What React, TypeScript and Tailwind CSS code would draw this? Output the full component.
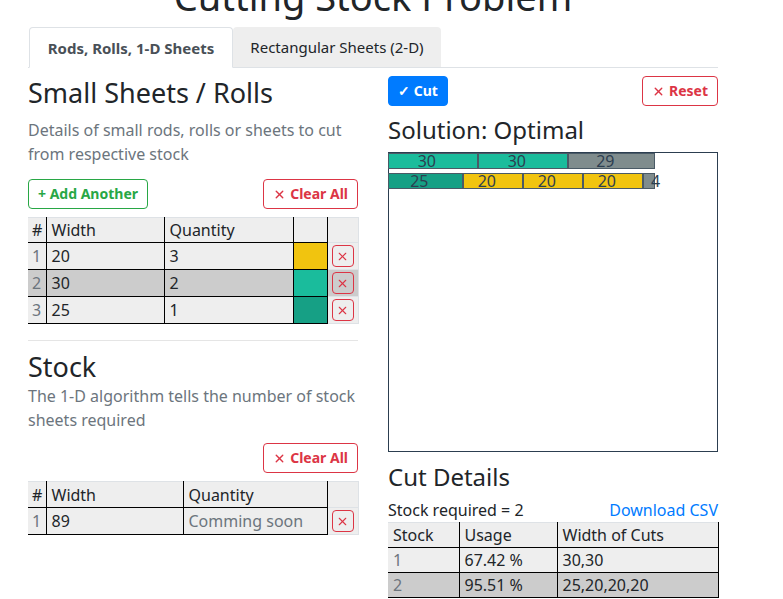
import { X } from "lucide-react";

const pieces = [
  { w: 20, q: 3, color: "bg-[#f1c40f]" },
  { w: 30, q: 2, color: "bg-[#1abc9c]" },
  { w: 25, q: 1, color: "bg-[#16a085]" },
];

const colorOf: Record<number, string> = {
  20: "bg-[#f1c40f]",
  30: "bg-[#1abc9c]",
  25: "bg-[#16a085]",
};

const layout = [
  { cuts: [30, 30], waste: 29 },
  { cuts: [25, 20, 20, 20], waste: 4 },
];

const SCALE = 3.01;

function Btn({ kind, children }: { kind: "green" | "red" | "blue"; children: React.ReactNode }) {
  const styles = {
    green: "border-[#28a745] text-[#28a745] bg-white",
    red: "border-[#dc3545] text-[#dc3545] bg-white",
    blue: "border-[#007bff] text-white bg-[#007bff]",
  }[kind];
  return (
    <button
      className={`inline-flex h-[30px] items-center gap-1 rounded-[4px] border px-[9px] text-[14px] font-bold ${styles}`}
    >
      {children}
    </button>
  );
}

function DelBtn() {
  return (
    <span className="mx-auto flex h-[22px] w-[22px] items-center justify-center rounded-[4px] border border-[#dc3545] text-[#dc3545]">
      <X className="h-[13px] w-[13px]" strokeWidth={2} />
    </span>
  );
}

function Bar({ value, waste, label }: { value: number; waste?: boolean; label?: string }) {
  const color = waste ? "bg-[#7f8c8d]" : colorOf[value];
  return (
    <div
      className={`relative h-[16px] shrink-0 border border-[#4a5a66] ${color}`}
      style={{ width: Math.round(value * SCALE) }}
    >
      <span
        className={`absolute top-0 text-[16px] leading-[15px] text-[#2c3e50] ${
          label === "left" ? "left-[7px]" : "right-[calc(50%-3px)]"
        }`}
      >
        {value}
      </span>
    </div>
  );
}

export default function App() {
  return (
    <div className="min-h-screen overflow-hidden bg-white font-['Noto_Sans',sans-serif] text-[16px] leading-[24px] text-[#212529]">
      <div className="ml-[28px] w-[690px]">
        <h1 className="-mt-[27px] mb-[8px] text-center text-[38px] leading-[46px]">
          Cutting Stock Problem
        </h1>

        <div className="flex border-b border-[#dee2e6]">
          <div className="-mb-px ml-px flex h-[41px] w-[204px] items-center justify-center rounded-t-[4px] border border-[#dee2e6] border-b-white bg-white text-[15px] font-bold text-[#495057]">
            Rods, Rolls, 1-D Sheets
          </div>
          <div className="flex h-[40px] w-[208px] items-center justify-center rounded-t-[4px] bg-[#eeeeee] text-[15px] text-[#212529]">
            Rectangular Sheets (2-D)
          </div>
        </div>

        <div className="mt-[8px] flex gap-[30px]">
          {/* left column */}
          <div className="w-[330px]">
            <h3 className="mb-[8px] text-[27px] leading-[34px]">Small Sheets / Rolls</h3>
            <p className="mb-[13px] text-[#6c757d]">
              Details of small rods, rolls or sheets to cut from respective stock
            </p>
            <div className="flex justify-between">
              <Btn kind="green">+ Add Another</Btn>
              <Btn kind="red">
                <X className="h-[13px] w-[13px]" strokeWidth={2.5} /> Clear All
              </Btn>
            </div>

            <table className="mt-[8px] w-[330px] table-fixed border-collapse">
              <colgroup>
                <col className="w-[18px]" />
                <col className="w-[118px]" />
                <col className="w-[129px]" />
                <col className="w-[34px]" />
                <col className="w-[31px]" />
              </colgroup>
              <thead>
                <tr className="h-[25px] bg-[#eeeeee]">
                  <th className="border-t border-r border-b border-t-[#dee2e6] border-r-black border-b-black px-[4px] text-left font-normal">#</th>
                  <th className="border-t border-r border-b border-t-[#dee2e6] border-r-black border-b-black px-[5px] text-left font-normal">Width</th>
                  <th className="border-t border-r border-b border-t-[#dee2e6] border-r-black border-b-black px-[5px] text-left font-normal">Quantity</th>
                  <th className="border-t border-r border-b border-t-[#dee2e6] border-r-black border-b-black"></th>
                  <th className="border border-[#dee2e6]"></th>
                </tr>
              </thead>
              <tbody>
                {pieces.map((p, i) => {
                  const bg = i === 1 ? "bg-[#cccccc]" : "bg-[#eeeeee]";
                  return (
                    <tr key={i} className="h-[27px]">
                      <td className={`border-r border-b border-black px-[4px] text-[#6c757d] ${bg}`}>{i + 1}</td>
                      <td className={`border-r border-b border-black px-[5px] ${bg}`}>{p.w}</td>
                      <td className={`border-r border-b border-black px-[5px] ${bg}`}>{p.q}</td>
                      <td className={`border-r border-b border-black ${p.color}`}></td>
                      <td className={`border border-[#dee2e6] ${bg}`}>
                        <DelBtn />
                      </td>
                    </tr>
                  );
                })}
              </tbody>
            </table>

            <hr className="mt-[16px] border-[#e5e5e5]" />

            <h3 className="mt-[9px] text-[27px] leading-[34px]">Stock</h3>
            <p className="text-[#6c757d]">
              The 1-D algorithm tells the number of stock sheets required
            </p>
            <div className="mt-[11px] flex justify-end">
              <Btn kind="red">
                <X className="h-[13px] w-[13px]" strokeWidth={2.5} /> Clear All
              </Btn>
            </div>

            <table className="mt-[8px] w-[330px] table-fixed border-collapse">
              <colgroup>
                <col className="w-[18px]" />
                <col className="w-[137px]" />
                <col className="w-[144px]" />
                <col className="w-[31px]" />
              </colgroup>
              <thead>
                <tr className="h-[26px] bg-[#eeeeee]">
                  <th className="border-t border-r border-b border-t-[#dee2e6] border-r-black border-b-black px-[4px] text-left font-normal">#</th>
                  <th className="border-t border-r border-b border-t-[#dee2e6] border-r-black border-b-black px-[5px] text-left font-normal">Width</th>
                  <th className="border-t border-r border-b border-t-[#dee2e6] border-r-black border-b-black px-[5px] text-left font-normal">Quantity</th>
                  <th className="border border-[#dee2e6]"></th>
                </tr>
              </thead>
              <tbody>
                <tr className="h-[27px] bg-[#eeeeee]">
                  <td className="border-r border-b border-black px-[4px] text-[#6c757d]">1</td>
                  <td className="border-r border-b border-black px-[5px]">89</td>
                  <td className="border-r border-b border-black px-[5px] text-[#6c757d]">Comming soon</td>
                  <td className="border border-[#dee2e6]">
                    <DelBtn />
                  </td>
                </tr>
              </tbody>
            </table>
          </div>

          {/* right column */}
          <div className="w-[330px]">
            <div className="flex justify-between">
              <Btn kind="blue">✓ Cut</Btn>
              <Btn kind="red">
                <X className="h-[13px] w-[13px]" strokeWidth={2.5} /> Reset
              </Btn>
            </div>
            <h4 className="mt-[9px] mb-[8px] text-[24px] leading-[29px]">Solution: Optimal</h4>

            <div className="h-[300px] border border-[#2c3e50]">
              <div className="flex flex-col gap-[4px]">
                {layout.map((row, r) => (
                  <div key={r} className="-ml-px flex">
                    {row.cuts.map((c, i) => (
                      <Bar key={i} value={c} />
                    ))}
                    <Bar value={row.waste} waste label={row.waste < 10 ? "left" : undefined} />
                  </div>
                ))}
              </div>
            </div>

            <h4 className="mt-[10px] text-[24px] leading-[29px]">Cut Details</h4>
            <div className="mt-[7px] flex items-end justify-between">
              <span>Stock required = 2</span>
              <a href="#" className="text-[#007bff]">
                Download CSV
              </a>
            </div>
            <table className="w-[330px] table-fixed border-collapse">
              <colgroup>
                <col className="w-[71px]" />
                <col className="w-[98px]" />
                <col className="w-[161px]" />
              </colgroup>
              <thead>
                <tr className="h-[25px] bg-[#eeeeee]">
                  <th className="border-t border-r border-b border-t-[#dee2e6] border-r-black border-b-black px-[5px] text-left font-normal">Stock</th>
                  <th className="border-t border-r border-b border-t-[#dee2e6] border-r-black border-b-black px-[5px] text-left font-normal">Usage</th>
                  <th className="border-t border-r border-b border-t-[#dee2e6] border-r-black border-b-black px-[5px] text-left font-normal">Width of Cuts</th>
                </tr>
              </thead>
              <tbody>
                <tr className="h-[25px] bg-[#eeeeee]">
                  <td className="border-r border-b border-black px-[5px] text-[#6c757d]">1</td>
                  <td className="border-r border-b border-black px-[5px]">67.42 %</td>
                  <td className="border-r border-b border-black px-[5px]">30,30</td>
                </tr>
                <tr className="h-[25px] bg-[#cccccc]">
                  <td className="border-r border-b border-black px-[5px] text-[#6c757d]">2</td>
                  <td className="border-r border-b border-black px-[5px]">95.51 %</td>
                  <td className="border-r border-b border-black px-[5px]">25,20,20,20</td>
                </tr>
              </tbody>
            </table>
          </div>
        </div>
      </div>
    </div>
  );
}
